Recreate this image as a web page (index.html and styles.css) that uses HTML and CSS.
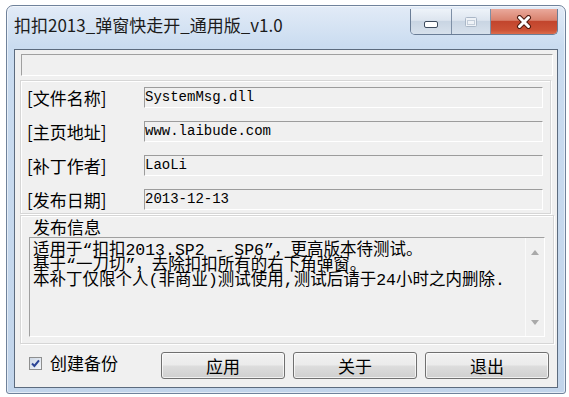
FILE: index.html
```html
<!DOCTYPE html>
<html lang="zh-CN">
<head>
  <meta charset="UTF-8">
  <title>扣扣2013_弹窗快走开_通用版_v1.0</title>
  <link rel="stylesheet" href="styles.css">
</head>
<body>

<div class="window">
  <div class="titlebar">
    <span class="title">扣扣2013_弹窗快走开_通用版_v1.0</span>
    <div class="caption">
      <div class="cap cap-min">
        <svg width="14" height="7" viewBox="0 0 14 7"><rect x="0.5" y="0.5" width="13" height="6" rx="1.5" fill="#fff" stroke="#3d4b5e"/></svg>
      </div>
      <div class="cap cap-max">
        <svg width="12" height="10" viewBox="0 0 12 10"><rect x="0.5" y="0.5" width="11" height="9" rx="1" fill="#eef2f7" stroke="#aab7c7"/><rect x="2.5" y="3.5" width="7" height="4" fill="none" stroke="#c3cdd9"/></svg>
      </div>
      <div class="cap cap-close">
        <svg width="16" height="14" viewBox="0 0 16 14"><path d="M3.5 2.5 L12.5 11.5 M12.5 2.5 L3.5 11.5" stroke="#4e1a10" stroke-width="5" stroke-linecap="round"/><path d="M3.5 2.5 L12.5 11.5 M12.5 2.5 L3.5 11.5" stroke="#fff" stroke-width="3" stroke-linecap="round"/></svg>
      </div>
    </div>
  </div>

  <div class="client">
    <div class="status-box"></div>

    <div class="group fields">
      <div class="row"><span class="label">[文件名称]</span><div class="field">SystemMsg.dll</div></div>
      <div class="row"><span class="label">[主页地址]</span><div class="field">www.laibude.com</div></div>
      <div class="row"><span class="label">[补丁作者]</span><div class="field">LaoLi</div></div>
      <div class="row"><span class="label">[发布日期]</span><div class="field">2013-12-13</div></div>
    </div>

    <div class="group info">
      <div class="group-title">发布信息</div>
      <div class="memo">
        <div class="memo-text">
          适用于“扣扣2013.SP2 - SP6”，更高版本待测试。<br>
          基于“一刀切”，去除扣扣所有的右下角弹窗。<br>
          本补丁仅限个人(非商业)测试使用,测试后请于24小时之内删除.
        </div>
        <div class="scrollbar">
          <svg width="8" height="5" viewBox="0 0 8 5"><path d="M0 5 L4 0 L8 5 Z" fill="#a9a9a9"/></svg>
          <svg width="8" height="5" viewBox="0 0 8 5"><path d="M0 0 L4 5 L8 0 Z" fill="#a9a9a9"/></svg>
        </div>
      </div>
    </div>

    <div class="footer">
      <label class="check">
        <svg width="13" height="13" viewBox="0 0 13 13">
          <defs>
            <linearGradient id="boxFill" x1="0" y1="0" x2="1" y2="1">
              <stop offset="0" stop-color="#cbd6e4"/>
              <stop offset="1" stop-color="#f6f8fb"/>
            </linearGradient>
          </defs>
          <rect x="0.5" y="0.5" width="12" height="12" fill="url(#boxFill)" stroke="#8e8f8f"/>
          <path d="M3 6.5 L5.4 9 L10 3.3" fill="none" stroke="#2a4496" stroke-width="2"/>
        </svg>
        创建备份
      </label>
      <div class="buttons">
        <button>应用</button>
        <button>关于</button>
        <button>退出</button>
      </div>
    </div>
  </div>
</div>

</body>
</html>
```

FILE: styles.css
```css
body {
  margin: 0;
  background: #fff;
  font-family: "Noto Sans CJK SC", sans-serif;
  color: #000;
}

.window {
  box-sizing: border-box;
  width: 560px;
  height: 389px;
  margin: 5px 0 0 6px;
  padding: 0 7px 5px;
  border: 1px solid #6f829b;
  border-radius: 7px 7px 3px 3px;
  background: linear-gradient(#e2ebf7, #cadcf0 40px, #c2d5eb);
  box-shadow: inset 0 0 0 1px rgba(255, 255, 255, 0.55);
  display: flex;
  flex-direction: column;
}

.titlebar {
  height: 43px;
  flex: none;
  display: flex;
  align-items: flex-start;
}

.title {
  margin-top: 8px;
  font-size: 17px;
  line-height: 22px;
  color: #1b1b1b;
}

.caption {
  margin-left: auto;
  margin-top: 3px;
  height: 25px;
  display: flex;
  border: 1px solid #6a7d96;
  border-top: 0;
  border-radius: 0 0 5px 5px;
  overflow: hidden;
}

.cap {
  display: flex;
  align-items: center;
  justify-content: center;
  background: linear-gradient(#eef3f9, #dde5ef 45%, #c9d5e3 50%, #d7e1ec);
}

.cap + .cap {
  border-left: 1px solid #7d8fa6;
}

.cap-min {
  width: 40px;
  padding-top: 5px;
  box-sizing: border-box;
}

.cap-max {
  width: 38px;
}

.cap-close {
  width: 66px;
  background: linear-gradient(#eaa99b, #d9826e 45%, #c2452d 50%, #cc5236 85%, #dc6c4c);
}

.client {
  box-sizing: border-box;
  height: 339px;
  flex: none;
  border: 1px solid #5c6b7e;
  background: #f0f0f0;
  display: flex;
  flex-direction: column;
}

.status-box {
  box-sizing: border-box;
  width: 532px;
  height: 22px;
  margin: 4px 0 0 6px;
  border-top: 1px solid #a0a0a0;
  border-left: 1px solid #a0a0a0;
  border-bottom: 1px solid #fff;
  border-right: 1px solid #fff;
}

.group {
  box-sizing: border-box;
  border: 1px solid #d6d6d6;
  box-shadow: inset 1px 1px 0 #fff, 1px 1px 0 #fff;
}

.fields {
  width: 531px;
  height: 134px;
  margin: 4px 0 0 5px;
  padding: 6px 7px 0 6px;
  display: flex;
  flex-direction: column;
  gap: 13px;
}

.row {
  display: flex;
  align-items: center;
  height: 21px;
}

.label {
  width: 117px;
  flex: none;
  font-size: 17px;
  line-height: 21px;
}

.field {
  flex: 1;
  box-sizing: border-box;
  height: 21px;
  border-top: 1px solid #9c9c9c;
  border-left: 1px solid #9c9c9c;
  border-bottom: 1px solid #fff;
  border-right: 1px solid #fff;
  font-family: "Liberation Mono", monospace;
  font-size: 14px;
  line-height: 19px;
}

.info {
  width: 534px;
  height: 129px;
  margin: 1px 0 0 5px;
  padding: 1px 8px 0;
}

.group-title {
  margin-left: 4px;
  font-size: 17px;
  line-height: 20px;
}

.memo {
  box-sizing: border-box;
  height: 100px;
  border-top: 1px solid #a0a0a0;
  border-left: 1px solid #a0a0a0;
  border-bottom: 1px solid #fff;
  border-right: 1px solid #fff;
  display: flex;
}

.memo-text {
  flex: 1;
  padding: 5px 0 0 3px;
  font-family: "Liberation Mono", "Noto Sans CJK SC", monospace;
  font-size: 16.5px;
  line-height: 15px;
}

.scrollbar {
  width: 18px;
  border-left: 1px solid #fafafa;
  display: flex;
  flex-direction: column;
  align-items: center;
  justify-content: space-between;
  padding: 12px 0 11px;
}

.footer {
  display: flex;
  align-items: flex-start;
  margin-top: 8px;
  padding: 0 8px 0 14px;
}

.check {
  display: flex;
  align-items: center;
  gap: 8px;
  margin-top: 1px;
  margin-right: auto;
  font-size: 17px;
  line-height: 20px;
}

.buttons {
  display: flex;
  gap: 8px;
}

button {
  box-sizing: border-box;
  width: 124px;
  height: 27px;
  padding: 0;
  border: 1px solid #707070;
  border-radius: 3px;
  background: linear-gradient(#f2f2f2, #ebebeb 48%, #dddddd 52%, #cfcfcf);
  box-shadow: inset 0 0 0 1px rgba(255, 255, 255, 0.7);
  font-family: "Noto Sans CJK SC", sans-serif;
  font-size: 17px;
  line-height: 23px;
  color: #000;
}
```
